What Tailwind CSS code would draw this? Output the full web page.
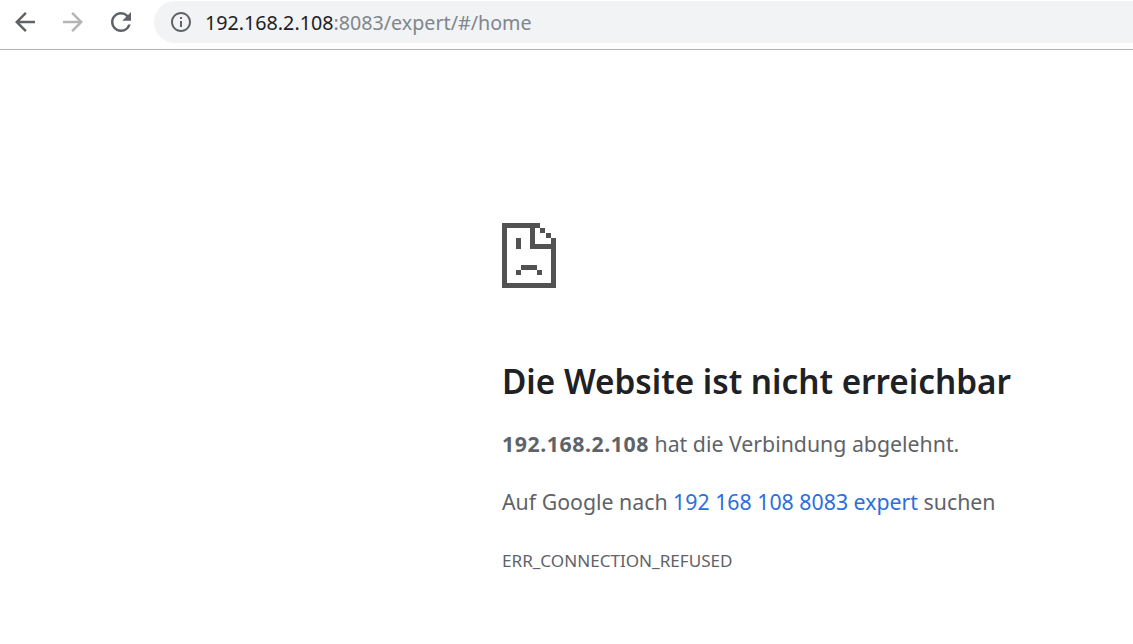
<!DOCTYPE html>
<html lang="de">
  <head>
    <meta charset="UTF-8" />
    <title>192.168.2.108</title>
    <script src="https://cdn.jsdelivr.net/npm/@tailwindcss/browser@4"></script>
  </head>
  <body class="bg-white overflow-hidden font-['Noto_Sans','Open_Sans',sans-serif]">
    <!-- Toolbar -->
    <div class="h-[50px] border-b border-[#b4b4b4] flex items-start overflow-hidden">
      <div class="flex items-center h-[43px] pl-[10px] gap-[18px] shrink-0">
        <svg class="w-[30px] h-[30px]" viewBox="0 0 24 24" fill="#5f6368"><path d="M20 11H7.83l5.59-5.59L12 4l-8 8 8 8 1.41-1.41L7.83 13H20v-2z" /></svg>
        <svg class="w-[30px] h-[30px]" viewBox="0 0 24 24" fill="#b3b5b7"><path d="M12 4l-1.41 1.41L16.17 11H4v2h12.17l-5.58 5.59L12 20l8-8z" /></svg>
        <svg class="w-[30px] h-[30px]" viewBox="0 0 24 24" fill="#5f6368"><path d="M17.65 6.35A7.958 7.958 0 0 0 12 4c-4.42 0-7.99 3.58-7.99 8s3.57 8 7.99 8c3.73 0 6.84-2.55 7.73-6h-2.08A5.99 5.99 0 0 1 12 18c-3.31 0-6-2.69-6-6s2.69-6 6-6c1.66 0 3.14.69 4.22 1.78L13 11h7V4l-2.35 2.35z" /></svg>
      </div>
      <div class="ml-[18px] mt-[1px] h-[42px] flex-1 -mr-[40px] rounded-l-full bg-[#f1f3f4] flex items-center pl-[15px] gap-[12px]">
        <svg class="w-[24px] h-[24px] shrink-0" viewBox="0 0 24 24" fill="#5f6368"><path d="M11 7h2v2h-2zm0 4h2v6h-2zm1-9C6.48 2 2 6.48 2 12s4.48 10 10 10 10-4.48 10-10S17.52 2 12 2zm0 18c-4.41 0-8-3.59-8-8s3.59-8 8-8 8 3.59 8 8-3.59 8-8 8z" /></svg>
        <div class="pt-[1px] text-[19.7px] text-[#80868b] whitespace-nowrap"><span class="text-[#202124]">192.168.2.108</span>:8083/expert/#/home</div>
      </div>
    </div>

    <!-- Error content -->
    <main class="pl-[502px] pt-[173px]">
      <svg class="w-[54px] h-[65px] block" viewBox="502 223 54 65" fill="#525252" shape-rendering="crispEdges">
        <rect x="502" y="223" width="38" height="5" />
        <rect x="502" y="223" width="5" height="65" />
        <rect x="502" y="283" width="54" height="5" />
        <rect x="551" y="238" width="5" height="50" />
        <rect x="530" y="223" width="5" height="26" />
        <rect x="530" y="244" width="26" height="5" />
        <rect x="540" y="228" width="5" height="5" />
        <rect x="546" y="233" width="5" height="5" />
        <rect x="516" y="238" width="5" height="11" />
        <rect x="521" y="265" width="16" height="5" />
        <rect x="516" y="270" width="5" height="5" />
        <rect x="537" y="270" width="5" height="5" />
      </svg>
      <h1 class="mt-[68px] text-[33.3px] leading-[50px] font-semibold text-[#202124] whitespace-nowrap">Die Website ist nicht erreichbar</h1>
      <p class="mt-[23px] text-[21.3px] leading-[30px] text-[#5f6368] whitespace-nowrap"><b class="font-bold tracking-[0.55px]">192.168.2.108</b> hat die Verbindung abgelehnt.</p>
      <p class="mt-[28px] text-[21.3px] leading-[30px] text-[#5f6368] whitespace-nowrap">Auf Google nach <a class="text-[#2a6fdb]">192 168 108 8083 expert</a> suchen</p>
      <p class="mt-[29px] text-[17.1px] leading-[30px] text-[#5f6368] whitespace-nowrap">ERR_CONNECTION_REFUSED</p>
    </main>
  </body>
</html>
